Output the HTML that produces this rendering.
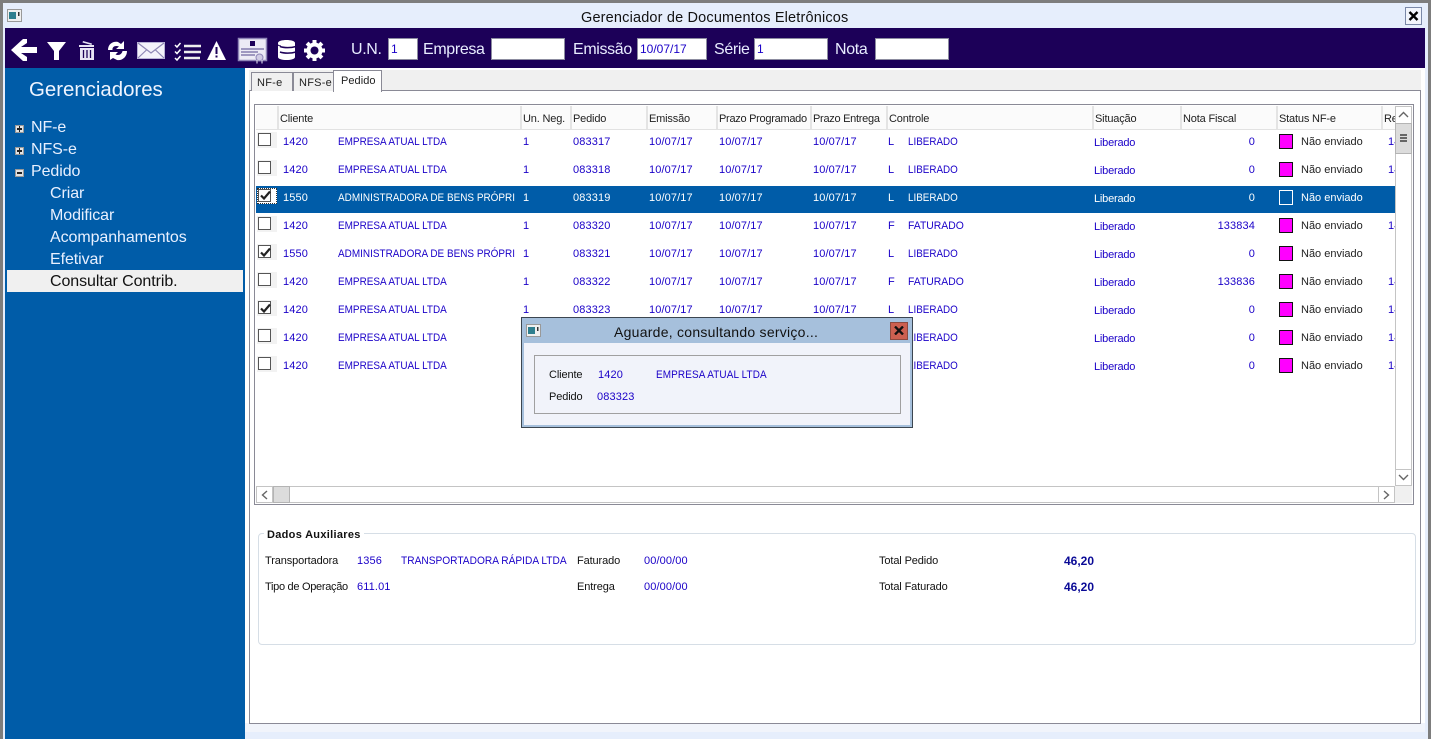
<!DOCTYPE html>
<html><head><meta charset="utf-8"><title>Gerenciador de Documentos Eletrônicos</title>
<style>
html,body{margin:0;padding:0;width:1431px;height:739px;overflow:hidden;background:#fff}
body{font-family:"Liberation Sans",sans-serif;font-size:11px;color:#111;position:relative}
div,span,svg{position:absolute;box-sizing:border-box}
span{white-space:nowrap;line-height:14px}
.tb{color:#e8ecff;font-size:16px;line-height:20px;top:40px;letter-spacing:-.35px}
.inp{top:38px;height:22px;background:#fff;border:1px solid #8c8ca0;color:#1a00c8;font-size:12px;line-height:20px;padding-left:2px}
.nav{color:#e8f0ff;font-size:16px;line-height:20px;left:50px;letter-spacing:-.08px}
.exp{left:15px;width:9px;height:8px;background:#e4e4e4;border:1px solid #999}
.exp i{position:absolute;left:1px;top:2px;width:5px;height:2px;background:#222}
.exp b{position:absolute;left:3px;top:0;width:1px;height:6px;background:#222}
.h{top:112px;color:#222;letter-spacing:-.17px}
.s{top:106px;width:2px;height:23px;background:#e4e4e4}
.r{left:257px;width:1138px;height:28px;overflow:hidden;color:#1a00c8}
.r span{top:3px;letter-spacing:.12px}
.r .n{color:#222;letter-spacing:0}
.r .q{top:4px;letter-spacing:-.2px}
.u,.r .u{transform-origin:0 0;transform:scaleX(.905);letter-spacing:0}
.r .li{transform-origin:0 0;transform:scaleX(.895);letter-spacing:0}
.r .fa{transform-origin:0 0;transform:scaleX(.945);letter-spacing:0}
.sel{color:#fff}
.sel .n{color:#fff}
.r.sel span{top:5px}
.r.sel .q{top:6px}
.cb{left:1px;top:1px;width:13px;height:13px;background:#fff;border:1px solid #555}
.cbg{left:0;top:0;width:20px;height:16px;background:#f2f2f2}
.sq{left:1022px;top:2px;width:14px;height:15px;background:#f0f;border:1px solid #111}
.lb{color:#111;letter-spacing:-.12px}
.v{color:#1a00c8;letter-spacing:.12px}
.t{left:3px;top:3px}
.tot{font-size:12px;font-weight:bold;color:#0a0a96}
</style></head><body>

<!-- window frame -->
<div style="left:0;top:0;width:1431px;height:739px;background:#e6eefc"></div>
<div style="left:0;top:0;width:1431px;height:3px;background:#7d7d7d"></div>
<div style="left:0;top:0;width:3px;height:739px;background:#7d7d7d"></div>
<div style="left:1428px;top:0;width:3px;height:739px;background:#7d7d7d"></div>
<div style="left:5px;top:28px;width:1420px;height:40px;background:#1c0058"></div>
<div style="left:5px;top:68px;width:240px;height:671px;background:#005ca8"></div>
<div style="left:245px;top:68px;width:1180px;height:671px;background:#fff"></div>
<div style="left:245px;top:723px;width:1180px;height:9px;background:#f1f4fb"></div>
<div style="left:245px;top:732px;width:1180px;height:7px;background:#e6eefc"></div>
<div style="left:249px;top:70px;width:1172px;height:21px;background:#f0f0f0"></div>

<!-- title bar -->
<svg style="left:7px;top:9px" width="15" height="13" viewBox="0 0 15 13"><rect x=".5" y=".5" width="14" height="12" fill="#f0f0f0" stroke="#999"/><rect x="2" y="3" width="7" height="7" fill="#2f7f8f"/><rect x="11" y="3" width="1.5" height="4" fill="#333"/></svg>
<span style="left:581px;top:9px;font-size:14.5px;line-height:18px;color:#111;letter-spacing:.17px">Gerenciador de Documentos Eletrônicos</span>
<div style="left:1405px;top:7px;width:17px;height:18px;border:1px solid #7a88a8;background:#f2f5fc"></div>
<svg style="left:1408px;top:11px" width="11" height="10" viewBox="0 0 11 10"><path d="M1.5 1 L9.5 9 M9.5 1 L1.5 9" stroke="#000" stroke-width="2.4"/></svg>

<!-- toolbar icons -->
<svg style="left:0;top:28px" width="340" height="40" viewBox="0 28 340 40">
<path d="M11 50 L23 39 L27 39 L27 43 L21 47 L37 47 L37 53 L21 53 L27 57 L27 61 L23 61 Z" fill="#fff"/>
<path d="M47 42 H66 L59 51 V60 H54 V51 Z" fill="#fff"/>
<path d="M79 45 L94 45 V47 H79 Z M83 41 L92 43.5 L91.5 45 L82.5 42.5 Z" fill="#e8e4f4"/>
<path d="M80 48 H94 V60 H80 Z" fill="#e8e4f4"/><path d="M83.5 50 V58 M87 50 V58 M90.5 50 V58" stroke="#1c0058" stroke-width="1.3"/>
<path d="M108 50 C108 44 113 41 118 42 L121 44 L124 41 V49 H116 L119 46.5 C115 45 112 47 112.5 50 Z M127 51 C127 57 122 61 117 60 L113 58 L110 60 V52 H118 L115.5 54.5 C119 56 122 54 122.5 51 Z" fill="#fff"/>
<rect x="137.5" y="42.5" width="27" height="16" fill="#f4f2fa" stroke="#b9b2d6"/>
<path d="M138 43 L151 53 L164 43 M138 58 L147 49.5 M164 58 L155 49.5" fill="none" stroke="#8e86b4" stroke-width="1.2"/>
<path d="M175 45 L177 47 L180.5 43 M175 51.5 L177 53.5 L180.5 49.5 M175 58 L177 60 L180.5 56" fill="none" stroke="#fff" stroke-width="1.5"/>
<path d="M184 46 H201 M184 52 H201 M184 58 H200" stroke="#eee" stroke-width="2.4"/>
<path d="M216.5 41 L226 60 H207 Z" fill="#fff"/><rect x="215.5" y="47" width="2" height="7" fill="#1c0058"/><rect x="215.5" y="55.5" width="2" height="2" fill="#1c0058"/>
<rect x="238.5" y="38.5" width="28" height="22" fill="#ecebf5" stroke="#8f86b8" stroke-width="1.5"/>
<rect x="250" y="41" width="5" height="5" fill="#1c0058"/>
<path d="M241 49 H264 M241 52 H258 M241 55 H255" stroke="#6f66a0" stroke-width="1.3"/>
<circle cx="259.5" cy="57.5" r="3.5" fill="#d0cce4" stroke="#8f86b8"/>
<path d="M257 60 V63.5 M262 60 V63.5" stroke="#d0cce4" stroke-width="1.2"/>
<path d="M278 43 C278 39 295 39 295 43 V57 C295 61 278 61 278 57 Z" fill="#fff"/>
<path d="M280 46.5 C284 48 291 48 296 46.5 M280 52 C284 53.5 291 53.5 296 52" stroke="#1c0058" stroke-width="1.5" fill="none"/>
<path d="M276 42 C277 45 279 46 281 46" stroke="#1c0058" stroke-width="1" fill="none"/>
<g fill="#fff"><circle cx="314.5" cy="50.5" r="8"/><rect x="312.5" y="40" width="4" height="21"/><rect x="304" y="48.5" width="21" height="4"/><rect x="312.5" y="40" width="4" height="21" transform="rotate(45 314.5 50.5)"/><rect x="312.5" y="40" width="4" height="21" transform="rotate(-45 314.5 50.5)"/></g><circle cx="314.5" cy="50.5" r="4" fill="#1c0058"/>
</svg>

<!-- toolbar fields -->
<span class="tb" style="left:351px">U.N.</span><div class="inp" style="left:388px;width:30px">1</div>
<span class="tb" style="left:423px">Empresa</span><div class="inp" style="left:491px;width:74px"></div>
<span class="tb" style="left:573px">Emissão</span><div class="inp" style="left:637px;width:70px">10/07/17</div>
<span class="tb" style="left:714px">Série</span><div class="inp" style="left:754px;width:74px">1</div>
<span class="tb" style="left:835px">Nota</span><div class="inp" style="left:875px;width:74px"></div>

<!-- sidebar -->
<span style="left:29px;top:77px;font-size:20.4px;line-height:26px;color:#eef4ff">Gerenciadores</span>
<div class="exp" style="top:125px"><i></i><b></b></div><span class="nav" style="left:31px;top:118px">NF-e</span>
<div class="exp" style="top:147px"><i></i><b></b></div><span class="nav" style="left:31px;top:140px">NFS-e</span>
<div class="exp" style="top:169px"><i></i></div><span class="nav" style="left:31px;top:162px">Pedido</span>
<span class="nav" style="top:184px">Criar</span>
<span class="nav" style="top:206px">Modificar</span>
<span class="nav" style="top:228px">Acompanhamentos</span>
<span class="nav" style="top:250px">Efetivar</span>
<div style="left:7px;top:270px;width:236px;height:22px;background:#f0f0f0"></div>
<span class="nav" style="top:272px;color:#111">Consultar Contrib.</span>

<!-- tabs + panel -->
<div style="left:249px;top:90px;width:1172px;height:634px;border:1px solid #8a8a96;background:#fff"></div>
<div style="left:251px;top:72px;width:42px;height:19px;background:#f0f0f0;border:1px solid #8a8a96;border-bottom:0"></div>
<span style="left:257px;top:76px;color:#222;letter-spacing:.25px">NF-e</span>
<div style="left:293px;top:72px;width:41px;height:19px;background:#f0f0f0;border:1px solid #8a8a96;border-bottom:0"></div>
<span style="left:299px;top:76px;color:#222;letter-spacing:.25px">NFS-e</span>
<div style="left:333px;top:70px;width:49px;height:22px;background:#fff;border:1px solid #8a8a96;border-bottom:0"></div>
<span style="left:341px;top:74px;color:#222;letter-spacing:.05px">Pedido</span>

<!-- list -->
<div style="left:254px;top:104px;width:1160px;height:401px;border:1px solid #8a8a96;background:#fff"></div>
<div style="left:256px;top:106px;width:1139px;height:24px;background:#fbfbfb;border-bottom:1px solid #e2e2e2"></div>
<div class="s" style="left:277px"></div><div class="s" style="left:520px"></div><div class="s" style="left:570px"></div><div class="s" style="left:646px"></div><div class="s" style="left:716px"></div><div class="s" style="left:810px"></div><div class="s" style="left:886px"></div><div class="s" style="left:1092px"></div><div class="s" style="left:1180px"></div><div class="s" style="left:1276px"></div><div class="s" style="left:1381px"></div>
<span class="h" style="left:280px">Cliente</span><span class="h" style="left:523px">Un. Neg.</span><span class="h" style="left:573px">Pedido</span><span class="h" style="left:649px">Emissão</span><span class="h" style="left:719px;letter-spacing:-.28px">Prazo Programado</span><span class="h" style="left:813px;letter-spacing:-.28px">Prazo Entrega</span><span class="h" style="left:889px">Controle</span><span class="h" style="left:1095px">Situação</span><span class="h" style="left:1183px">Nota Fiscal</span><span class="h" style="left:1279px">Status NF-e</span><div style="left:1384px;top:106px;width:11px;height:23px;overflow:hidden"><span class="h" style="left:0;top:6px">Re</span></div>

<div class="r" style="top:132px"><div class="cbg"></div><div class="cb"></div><span style="left:26px">1420</span><span class="u" style="left:81px">EMPRESA ATUAL LTDA</span><span style="left:266px">1</span><span style="left:316px">083317</span><span style="left:392px">10/07/17</span><span style="left:462px">10/07/17</span><span style="left:556px">10/07/17</span><span style="left:631px">L</span><span class="li" style="left:651px">LIBERADO</span><span class="q" style="left:837px">Liberado</span><span style="right:140px">0</span><div class="sq"></div><span class="n" style="left:1044px">Não enviado</span><span style="left:1131px">14</span></div>
<div class="r" style="top:160px"><div class="cbg"></div><div class="cb"></div><span style="left:26px">1420</span><span class="u" style="left:81px">EMPRESA ATUAL LTDA</span><span style="left:266px">1</span><span style="left:316px">083318</span><span style="left:392px">10/07/17</span><span style="left:462px">10/07/17</span><span style="left:556px">10/07/17</span><span style="left:631px">L</span><span class="li" style="left:651px">LIBERADO</span><span class="q" style="left:837px">Liberado</span><span style="right:140px">0</span><div class="sq"></div><span class="n" style="left:1044px">Não enviado</span><span style="left:1131px">14</span></div>
<div style="left:256px;top:186px;width:1139px;height:27px;background:#005ca8"></div>
<div class="r sel" style="top:186px;height:27px"><div style="left:0;top:2px;width:20px;height:16px;background:#fff;border:1px dotted #333"></div><div class="cb" style="top:3px"></div><svg style="left:3px;top:4px" width="11" height="11" viewBox="0 0 11 11"><path d="M1 5.5 L4 8.5 L10 1.5" fill="none" stroke="#222" stroke-width="2.2"/></svg><span style="left:26px">1550</span><span class="u" style="left:81px">ADMINISTRADORA DE BENS PRÓPRI</span><span style="left:266px">1</span><span style="left:316px">083319</span><span style="left:392px">10/07/17</span><span style="left:462px">10/07/17</span><span style="left:556px">10/07/17</span><span style="left:631px">L</span><span class="li" style="left:651px">LIBERADO</span><span class="q" style="left:837px">Liberado</span><span style="right:140px">0</span><div class="sq" style="top:4px;background:transparent;border-color:#fff"></div><span class="n" style="left:1044px">Não enviado</span></div>
<div class="r" style="top:216px"><div class="cbg"></div><div class="cb"></div><span style="left:26px">1420</span><span class="u" style="left:81px">EMPRESA ATUAL LTDA</span><span style="left:266px">1</span><span style="left:316px">083320</span><span style="left:392px">10/07/17</span><span style="left:462px">10/07/17</span><span style="left:556px">10/07/17</span><span style="left:631px">F</span><span class="fa" style="left:651px">FATURADO</span><span class="q" style="left:837px">Liberado</span><span style="right:140px">133834</span><div class="sq"></div><span class="n" style="left:1044px">Não enviado</span><span style="left:1131px">14</span></div>
<div class="r" style="top:244px"><div class="cbg"></div><div class="cb"></div><svg class="t" width="11" height="11" viewBox="0 0 11 11"><path d="M1 5.5 L4 8.5 L10 1.5" fill="none" stroke="#222" stroke-width="2.2"/></svg><span style="left:26px">1550</span><span class="u" style="left:81px">ADMINISTRADORA DE BENS PRÓPRI</span><span style="left:266px">1</span><span style="left:316px">083321</span><span style="left:392px">10/07/17</span><span style="left:462px">10/07/17</span><span style="left:556px">10/07/17</span><span style="left:631px">L</span><span class="li" style="left:651px">LIBERADO</span><span class="q" style="left:837px">Liberado</span><span style="right:140px">0</span><div class="sq"></div><span class="n" style="left:1044px">Não enviado</span></div>
<div class="r" style="top:272px"><div class="cbg"></div><div class="cb"></div><span style="left:26px">1420</span><span class="u" style="left:81px">EMPRESA ATUAL LTDA</span><span style="left:266px">1</span><span style="left:316px">083322</span><span style="left:392px">10/07/17</span><span style="left:462px">10/07/17</span><span style="left:556px">10/07/17</span><span style="left:631px">F</span><span class="fa" style="left:651px">FATURADO</span><span class="q" style="left:837px">Liberado</span><span style="right:140px">133836</span><div class="sq"></div><span class="n" style="left:1044px">Não enviado</span><span style="left:1131px">14</span></div>
<div class="r" style="top:300px"><div class="cbg"></div><div class="cb"></div><svg class="t" width="11" height="11" viewBox="0 0 11 11"><path d="M1 5.5 L4 8.5 L10 1.5" fill="none" stroke="#222" stroke-width="2.2"/></svg><span style="left:26px">1420</span><span class="u" style="left:81px">EMPRESA ATUAL LTDA</span><span style="left:266px">1</span><span style="left:316px">083323</span><span style="left:392px">10/07/17</span><span style="left:462px">10/07/17</span><span style="left:556px">10/07/17</span><span style="left:631px">L</span><span class="li" style="left:651px">LIBERADO</span><span class="q" style="left:837px">Liberado</span><span style="right:140px">0</span><div class="sq"></div><span class="n" style="left:1044px">Não enviado</span><span style="left:1131px">14</span></div>
<div class="r" style="top:328px"><div class="cbg"></div><div class="cb"></div><span style="left:26px">1420</span><span class="u" style="left:81px">EMPRESA ATUAL LTDA</span><span class="li" style="left:651px">LIBERADO</span><span class="q" style="left:837px">Liberado</span><span style="right:140px">0</span><div class="sq"></div><span class="n" style="left:1044px">Não enviado</span><span style="left:1131px">14</span></div>
<div class="r" style="top:356px"><div class="cbg"></div><div class="cb"></div><span style="left:26px">1420</span><span class="u" style="left:81px">EMPRESA ATUAL LTDA</span><span class="li" style="left:651px">LIBERADO</span><span class="q" style="left:837px">Liberado</span><span style="right:140px">0</span><div class="sq"></div><span class="n" style="left:1044px">Não enviado</span><span style="left:1131px">14</span></div>

<!-- vertical scrollbar -->
<div style="left:1395px;top:106px;width:17px;height:380px;background:#fff;border:1px solid #c4c4c4"></div>
<svg style="left:1398px;top:111px" width="11" height="7" viewBox="0 0 11 7"><path d="M1 6 L5.5 1.5 L10 6" fill="none" stroke="#666" stroke-width="1.4"/></svg>
<div style="left:1395px;top:123px;width:17px;height:31px;background:#dcdcdc;border:1px solid #b4b4b4"></div>
<div style="left:1400px;top:134px;width:7px;height:8px;background:repeating-linear-gradient(#666 0 2px,#dcdcdc 2px 3px)"></div>
<div style="left:1395px;top:469px;width:17px;height:17px;background:#fff;border:1px solid #c4c4c4"></div>
<svg style="left:1398px;top:474px" width="11" height="7" viewBox="0 0 11 7"><path d="M1 1 L5.5 5.5 L10 1" fill="none" stroke="#666" stroke-width="1.4"/></svg>
<!-- horizontal scrollbar -->
<div style="left:256px;top:486px;width:1139px;height:17px;background:#fff;border:1px solid #c4c4c4"></div>
<div style="left:256px;top:486px;width:17px;height:17px;background:#fff;border:1px solid #c4c4c4"></div>
<svg style="left:261px;top:490px" width="7" height="10" viewBox="0 0 7 10"><path d="M6 1 L1.5 5 L6 9" fill="none" stroke="#666" stroke-width="1.4"/></svg>
<div style="left:273px;top:486px;width:17px;height:17px;background:#dcdcdc;border:1px solid #b4b4b4"></div>
<div style="left:1378px;top:486px;width:17px;height:17px;background:#fff;border:1px solid #c4c4c4"></div>
<svg style="left:1383px;top:490px" width="7" height="10" viewBox="0 0 7 10"><path d="M1 1 L5.5 5 L1 9" fill="none" stroke="#666" stroke-width="1.4"/></svg>
<div style="left:1395px;top:486px;width:17px;height:17px;background:#f0f0f0"></div>

<!-- dialog -->
<div style="left:521px;top:317px;width:392px;height:111px;background:#a6c0dc;border:1px solid #3c4650"></div>
<div style="left:524px;top:343px;width:386px;height:82px;background:#f1f3fa"></div>
<svg style="left:526px;top:324px" width="15" height="13" viewBox="0 0 15 13"><rect x=".5" y=".5" width="14" height="12" fill="#f0f0f0" stroke="#999"/><rect x="2" y="3" width="7" height="7" fill="#2f7f8f"/><rect x="11" y="3" width="1.5" height="4" fill="#333"/></svg>
<span style="left:614px;top:323px;font-size:14px;line-height:18px;color:#111;letter-spacing:.26px">Aguarde, consultando serviço...</span>
<div style="left:890px;top:322px;width:18px;height:18px;background:#cc6050;border:1px solid #8c4a40"></div>
<svg style="left:894px;top:326px" width="10" height="9" viewBox="0 0 10 9"><path d="M1 .5 L9 8.5 M9 .5 L1 8.5" stroke="#111" stroke-width="2.3"/></svg>
<div style="left:534px;top:355px;width:367px;height:59px;border:1px solid #a0a0a0"></div>
<span class="lb" style="left:549px;top:368px">Cliente</span><span class="v" style="left:598px;top:368px">1420</span><span class="v u" style="left:656px;top:368px">EMPRESA ATUAL LTDA</span>
<span class="lb" style="left:549px;top:390px">Pedido</span><span class="v" style="left:597px;top:390px">083323</span>

<!-- dados auxiliares -->
<div style="left:258px;top:533px;width:1158px;height:112px;border:1px solid #d6dee6;border-radius:4px"></div>
<div style="left:264px;top:526px;width:100px;height:14px;background:#fff"></div>
<span style="left:267px;top:528px;font-weight:bold;color:#111;letter-spacing:.3px">Dados Auxiliares</span>
<span class="lb" style="left:265px;top:554px">Transportadora</span><span class="v" style="left:357px;top:554px">1356</span><span class="v" style="left:401px;top:554px;transform-origin:0 0;transform:scaleX(.925);letter-spacing:0">TRANSPORTADORA RÁPIDA LTDA</span><span class="lb" style="left:577px;top:554px">Faturado</span><span class="v" style="left:644px;top:554px">00/00/00</span>
<span class="lb" style="left:265px;top:580px;letter-spacing:-.3px">Tipo de Operação</span><span class="v" style="left:357px;top:580px">611.01</span><span class="lb" style="left:577px;top:580px">Entrega</span><span class="v" style="left:644px;top:580px">00/00/00</span>
<span class="lb" style="left:879px;top:554px">Total Pedido</span><span class="tot" style="left:1064px;top:554px">46,20</span>
<span class="lb" style="left:879px;top:580px">Total Faturado</span><span class="tot" style="left:1064px;top:580px">46,20</span>
</body></html>
